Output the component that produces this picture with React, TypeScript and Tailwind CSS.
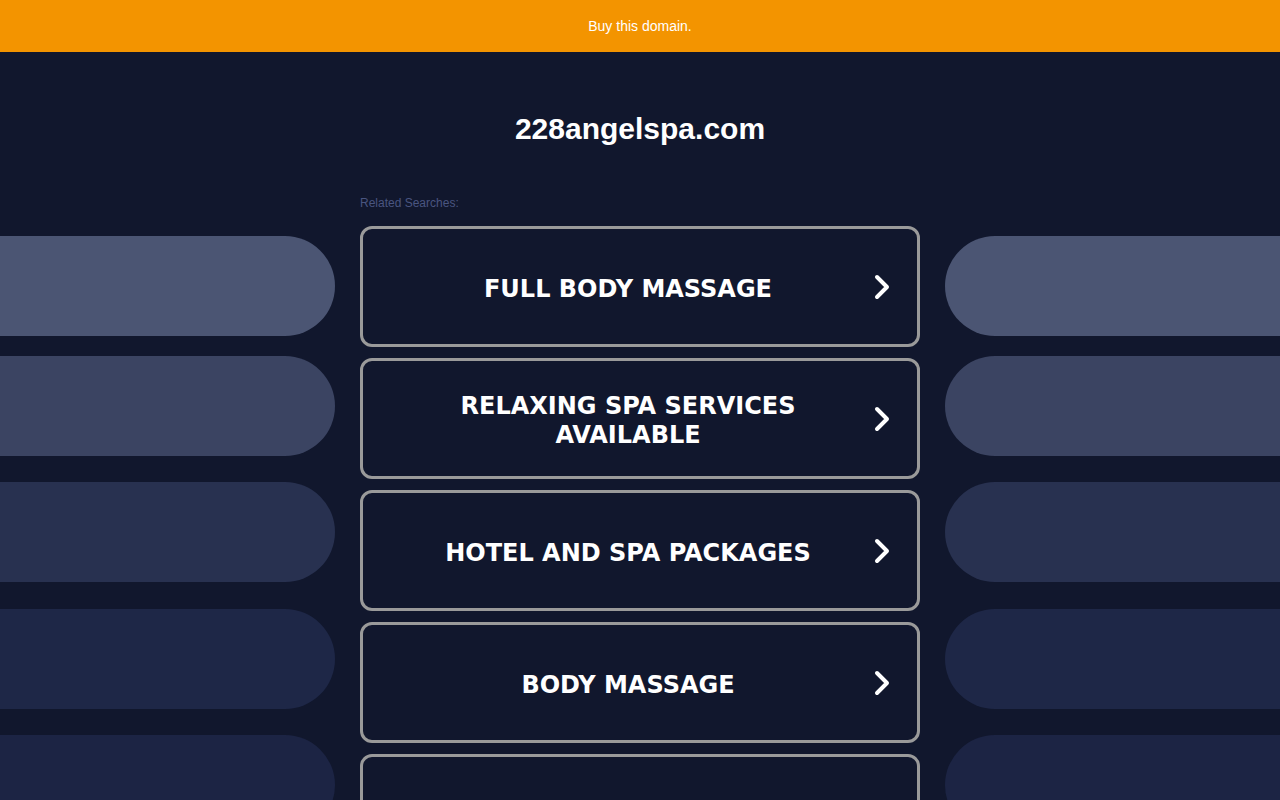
const searches = [
  'FULL BODY MASSAGE',
  'RELAXING SPA SERVICES AVAILABLE',
  'HOTEL AND SPA PACKAGES',
  'BODY MASSAGE',
  'SPA PACKAGES',
];

const pills = [
  { color: 'bg-[#4b5573]', gap: 'mt-0' },
  { color: 'bg-[#3b4462]', gap: 'mt-[20px]' },
  { color: 'bg-[#283150]', gap: 'mt-[26px]' },
  { color: 'bg-[#1e2747]', gap: 'mt-[27px]' },
  { color: 'bg-[#1c2444]', gap: 'mt-[26px]' },
];

function Chevron() {
  return (
    <svg width="18" height="26" viewBox="0 0 18 26" fill="none" className="shrink-0">
      <polyline
        points="4,3 14,13 4,23"
        stroke="white"
        strokeWidth="4"
        strokeLinecap="round"
        strokeLinejoin="round"
      />
    </svg>
  );
}

function SidePills({ side }: { side: 'left' | 'right' }) {
  return (
    <div className="flex w-[335px] shrink-0 flex-col pt-[184px]">
      {pills.map((p, i) => (
        <div
          key={i}
          className={`h-[100px] ${p.color} ${p.gap} ${
            side === 'left' ? 'rounded-r-[50px]' : 'rounded-l-[50px]'
          }`}
        />
      ))}
    </div>
  );
}

export default function App() {
  return (
    <div
      className="h-[800px] overflow-hidden bg-[#11172d]"
      style={{ fontFamily: '"Liberation Sans", Arial, sans-serif' }}
    >
      <div className="flex h-[52px] items-center justify-center bg-[#f39400] text-[14px] text-white">
        Buy this domain.
      </div>
      <div className="flex justify-between">
        <SidePills side="left" />
        <div className="flex w-[560px] shrink-0 flex-col">
          <h1 className="mt-[59px] text-center text-[30px] leading-[36px] font-bold text-white">
            228angelspa.com
          </h1>
          <p className="mt-[49px] text-[12px] leading-[14px] text-[#4a5580]">Related Searches:</p>
          <div className="mt-[16px] flex flex-col gap-[11px]">
            {searches.map((s) => (
              <div
                key={s}
                className="flex h-[121px] items-center rounded-[12px] border-[3px] border-[#9a9a9a] pl-[20px]"
              >
                <span
                  className="flex-1 px-[24px] pt-[5px] text-center text-[24px] leading-[29px] font-bold text-white"
                  style={{ fontFamily: '"DejaVu Sans", Verdana, sans-serif' }}
                >
                  {s}
                </span>
                <div className="mr-[26px]">
                  <Chevron />
                </div>
              </div>
            ))}
          </div>
        </div>
        <SidePills side="right" />
      </div>
    </div>
  );
}
